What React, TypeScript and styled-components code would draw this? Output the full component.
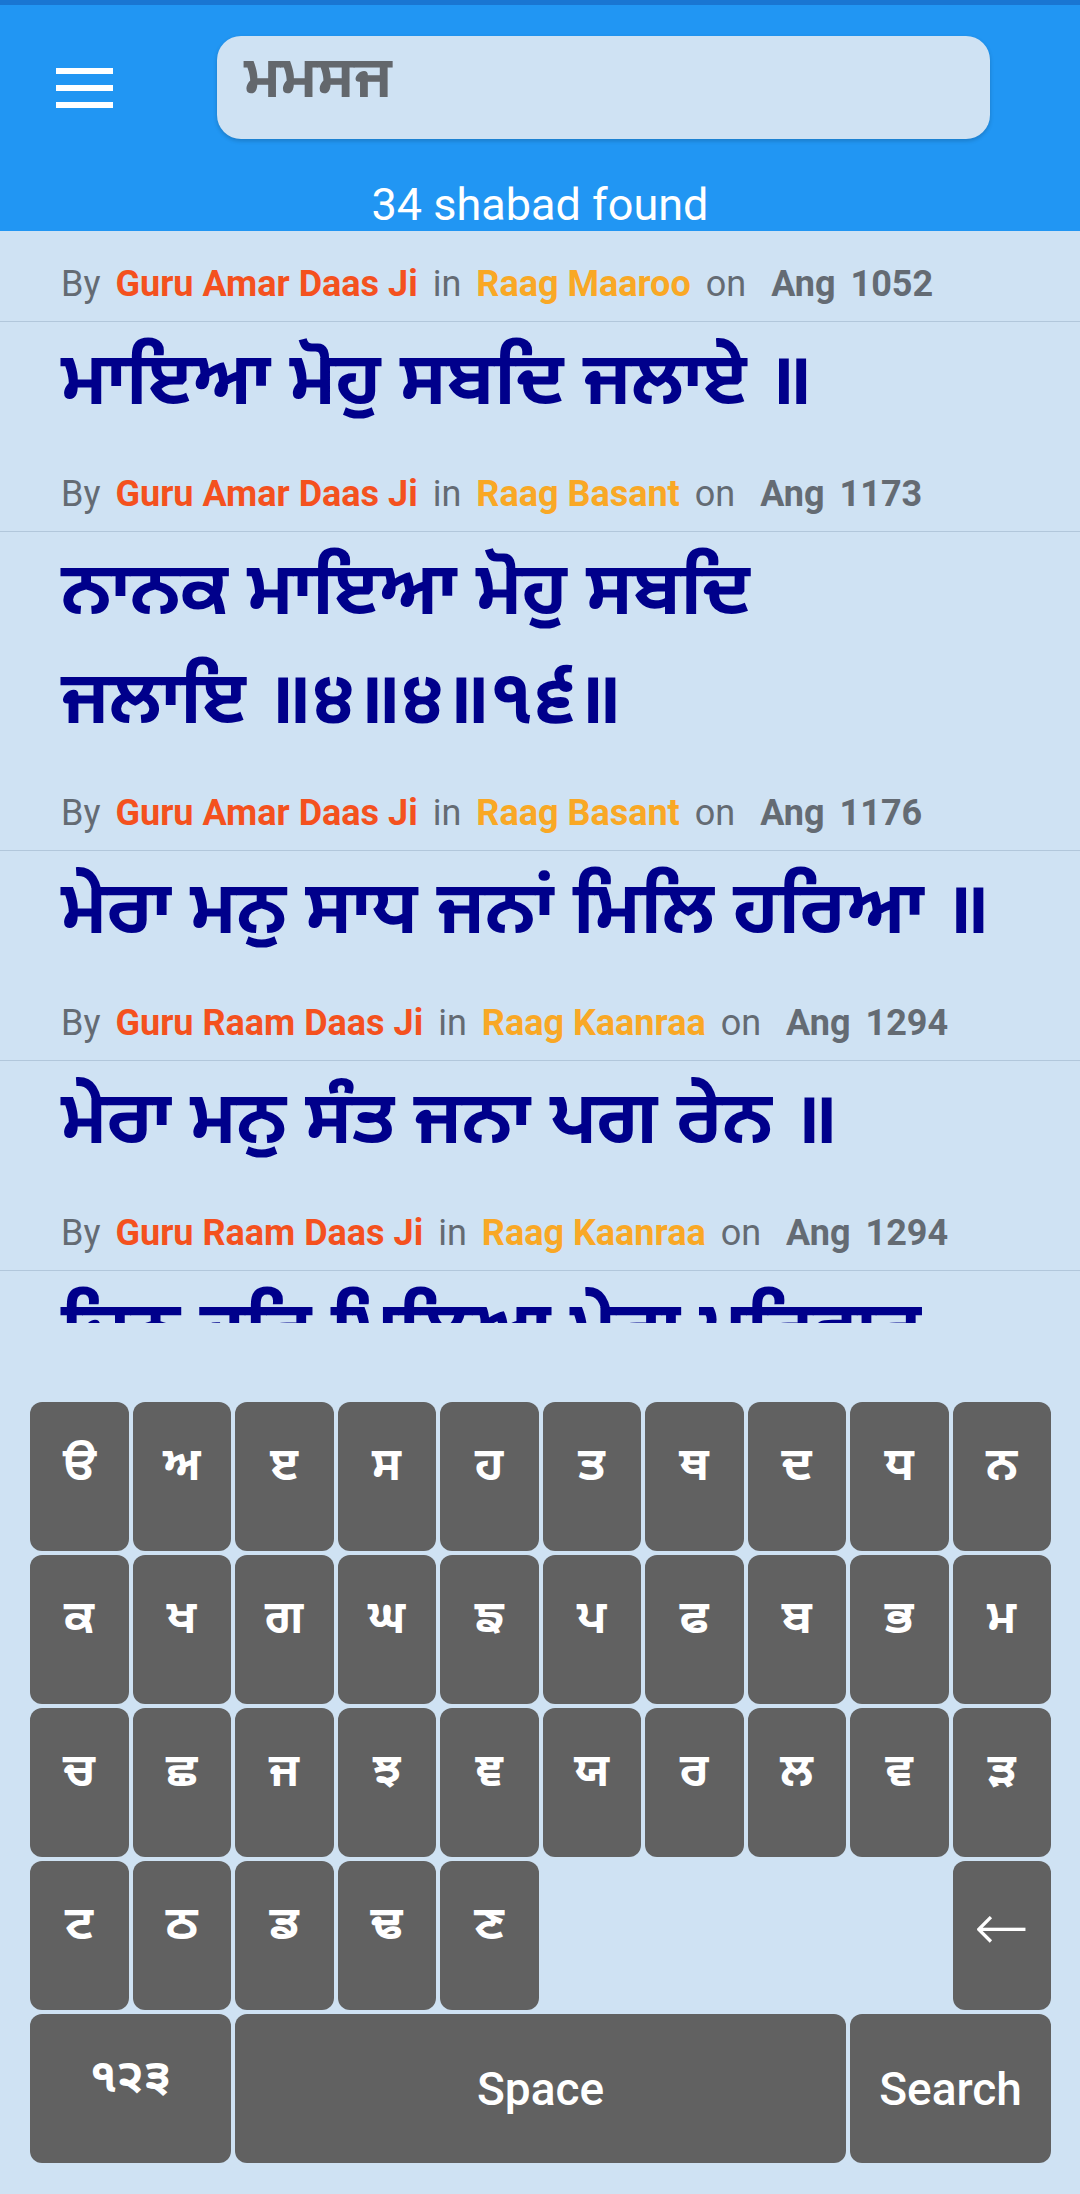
import React from 'react';
import styled, { createGlobalStyle } from 'styled-components';

const GlobalStyle = createGlobalStyle`
  html, body {
    margin: 0;
    padding: 0;
    background: #cfe2f3;
  }
  body {
    font-family: Roboto, "Noto Sans", sans-serif;
  }
`;

const GURMUKHI = `"Noto Sans Gurmukhi", "Lohit Gurmukhi", "Noto Sans", "DejaVu Sans", sans-serif`;

const Page = styled.div`
  width: 1080px;
  height: 2194px;
  display: flex;
  flex-direction: column;
  background: #cfe2f3;
  overflow: hidden;
`;

const Header = styled.header`
  height: 231px;
  background: #2196f3;
  border-top: 5px solid #1976d2;
  box-sizing: border-box;
  display: flex;
  flex-direction: column;
`;

const Toolbar = styled.div`
  display: flex;
  align-items: center;
  padding: 31px 90px 0 56px;
`;

const MenuButton = styled.button`
  width: 57px;
  height: 40px;
  margin-right: 104px;
  padding: 0;
  border: none;
  background: transparent;
  display: flex;
  flex-direction: column;
  justify-content: space-between;
  cursor: pointer;

  span {
    display: block;
    height: 6px;
    background: #fff;
  }
`;

const SearchBox = styled.div`
  flex: 1;
  height: 103px;
  border-radius: 24px;
  background: #cfe2f3;
  box-shadow: 0 2px 4px rgba(0, 0, 0, 0.18);
  padding: 12px 27px 0;
  box-sizing: border-box;
  font-family: ${GURMUKHI};
  font-size: 58px;
  font-weight: 700;
  line-height: 70px;
  color: #63676c;
`;

const Count = styled.div`
  margin-top: 40px;
  line-height: 52px;
  font-size: 45px;
  color: #fff;
  text-align: center;
`;

const List = styled.div`
  height: 1092px;
  overflow: hidden;
`;

const Meta = styled.div`
  display: flex;
  align-items: baseline;
  gap: 15px;
  padding: 33px 0 17px 61px;
  line-height: 40px;
  font-size: 36px;
  border-bottom: 1px solid #b2c7db;
  white-space: nowrap;
`;

const Word = styled.span<{ $tone: 'plain' | 'writer' | 'raag' | 'ang' | 'num' }>`
  color: ${(p) =>
    p.$tone === 'writer' ? '#f4511e' : p.$tone === 'raag' ? '#f9a825' : '#646b73'};
  font-weight: ${(p) => (p.$tone === 'plain' ? 400 : 700)};
  margin-left: ${(p) => (p.$tone === 'ang' ? '10px' : '0')};
`;

const Verse = styled.div`
  padding: 10px 30px 0 61px;
  font-family: ${GURMUKHI};
  font-size: 73px;
  font-weight: 700;
  line-height: 109px;
  color: #00008b;
`;

const Keep = styled.span`
  white-space: nowrap;
`;

const Keyboard = styled.div`
  margin-top: auto;
  padding: 0 29px 31px 30px;
  display: grid;
  grid-template-columns: repeat(10, 1fr);
  grid-auto-rows: 149px;
  gap: 4px;
`;

const Key = styled.button<{ $span?: number; $col?: number; $kind?: 'letter' | 'word' | 'arrow' }>`
  grid-column: ${(p) => (p.$col ? `${p.$col} / span ${p.$span || 1}` : `span ${p.$span || 1}`)};
  border: none;
  border-radius: 12px;
  background: #616161;
  color: #fff;
  display: flex;
  align-items: center;
  justify-content: center;
  padding: 0 0 ${(p) => (p.$kind === 'word' ? '0' : '16px')};
  font-family: ${(p) => (p.$kind === 'letter' || !p.$kind ? GURMUKHI : 'Roboto, "DejaVu Sans", sans-serif')};
  font-size: ${(p) => (p.$kind === 'arrow' ? '66px' : '46px')};
  font-weight: ${(p) => (p.$kind === 'word' ? 500 : p.$kind === 'arrow' ? 300 : 700)};
`;

type Result = {
  writer: string;
  raag: string;
  ang: number;
  verse: React.ReactNode;
};

const results: Result[] = [
  { writer: 'Guru Amar Daas Ji', raag: 'Raag Maaroo', ang: 1052, verse: 'ਮਾਇਆ ਮੋਹੁ ਸਬਦਿ ਜਲਾਏ ॥' },
  {
    writer: 'Guru Amar Daas Ji',
    raag: 'Raag Basant',
    ang: 1173,
    verse: (
      <>
        ਨਾਨਕ ਮਾਇਆ ਮੋਹੁ ਸਬਦਿ <Keep>ਜਲਾਇ ॥੪॥੪॥੧੬॥</Keep>
      </>
    ),
  },
  { writer: 'Guru Amar Daas Ji', raag: 'Raag Basant', ang: 1176, verse: 'ਮੇਰਾ ਮਨੁ ਸਾਧ ਜਨਾਂ ਮਿਲਿ ਹਰਿਆ ॥' },
  { writer: 'Guru Raam Daas Ji', raag: 'Raag Kaanraa', ang: 1294, verse: 'ਮੇਰਾ ਮਨੁ ਸੰਤ ਜਨਾ ਪਗ ਰੇਨ ॥' },
  { writer: 'Guru Raam Daas Ji', raag: 'Raag Kaanraa', ang: 1294, verse: 'ਜਿਨ ਹਰਿ ਮਿਲਿਆ ਮੇਰਾ ਪਰਿਵਾਰ' },
];

const letterRows = [
  ['ੳ', 'ਅ', 'ੲ', 'ਸ', 'ਹ', 'ਤ', 'ਥ', 'ਦ', 'ਧ', 'ਨ'],
  ['ਕ', 'ਖ', 'ਗ', 'ਘ', 'ਙ', 'ਪ', 'ਫ', 'ਬ', 'ਭ', 'ਮ'],
  ['ਚ', 'ਛ', 'ਜ', 'ਝ', 'ਞ', 'ਯ', 'ਰ', 'ਲ', 'ਵ', 'ੜ'],
  ['ਟ', 'ਠ', 'ਡ', 'ਢ', 'ਣ'],
];

export default function App() {
  return (
    <Page>
      <GlobalStyle />
      <Header>
        <Toolbar>
          <MenuButton aria-label="menu">
            <span />
            <span />
            <span />
          </MenuButton>
          <SearchBox>ਮਮਸਜ</SearchBox>
        </Toolbar>
        <Count>34 shabad found</Count>
      </Header>

      <List>
        {results.map((r, i) => (
          <div key={i}>
            <Meta>
              <Word $tone="plain">By</Word>
              <Word $tone="writer">{r.writer}</Word>
              <Word $tone="plain">in</Word>
              <Word $tone="raag">{r.raag}</Word>
              <Word $tone="plain">on</Word>
              <Word $tone="ang">Ang</Word>
              <Word $tone="num">{r.ang}</Word>
            </Meta>
            <Verse>{r.verse}</Verse>
          </div>
        ))}
      </List>

      <Keyboard>
        {letterRows.flat().map((k, i) => (
          <Key key={i}>{k}</Key>
        ))}
        <Key $col={10} $kind="arrow">
          ←
        </Key>
        <Key $span={2}>੧੨੩</Key>
        <Key $span={6} $kind="word">
          Space
        </Key>
        <Key $span={2} $kind="word">
          Search
        </Key>
      </Keyboard>
    </Page>
  );
}
